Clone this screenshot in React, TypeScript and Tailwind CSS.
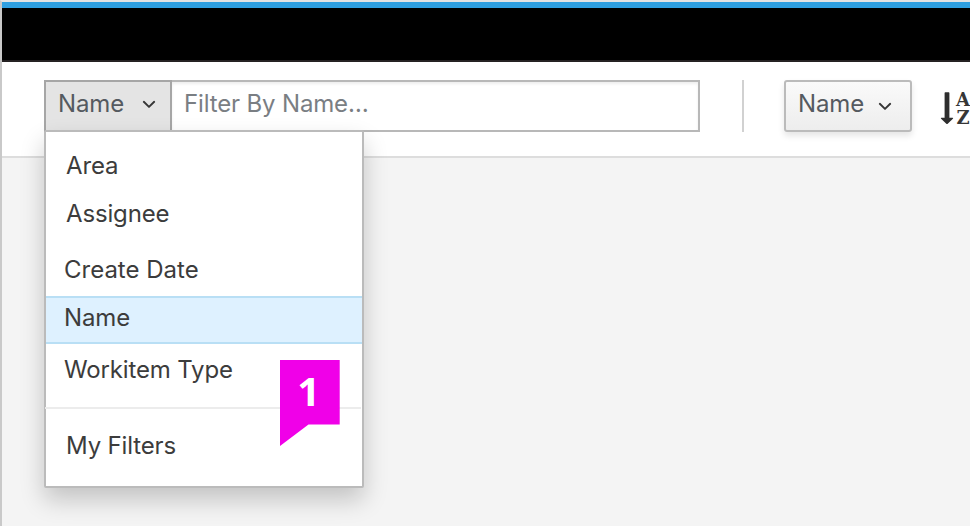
import React from "react";

const Chevron = ({ className = "" }: { className?: string }) => (
  <svg width="14" height="9" viewBox="0 0 14 9" fill="none" className={className}>
    <path d="M1.8 1.8L7 6.9L12.2 1.8" stroke="#363636" strokeWidth="1.9" strokeLinecap="round" strokeLinejoin="round" />
  </svg>
);

const SortIcon = () => (
  <div className="flex">
    <svg width="14" height="34" viewBox="0 0 14 34" className="shrink-0">
      <path d="M4.6 1Q4.6 .3 5.3 .3H8.7Q9.4 .3 9.4 1V25.8H12.4Q13.8 25.8 12.9 26.8L7.7 31.8Q7 32.4 6.3 31.8L1.1 26.8Q.2 25.8 1.6 25.8H4.6Z" fill="#2e2e2e" />
    </svg>
    <div className="ml-[2px] flex w-[14px] shrink-0 flex-col items-center font-['DejaVu_Serif',serif] text-[18px] font-bold leading-[18px] tracking-normal text-[#363636]">
      <span className="-mt-[1px]">A</span>
      <span>Z</span>
    </div>
  </div>
);

const items = [
  { label: "Area", row: "h-12 pl-[20px] leading-[48px]" },
  { label: "Assignee", row: "mb-2 h-12 pl-[20px] leading-[48px]" },
  { label: "Create Date", row: "mb-[2px] h-12 pl-[18px] leading-[48px] tracking-normal" },
  { label: "Name", row: "mb-[2px] h-12 border-y-2 border-[#b9dff5] bg-[#def1ff] pl-[18px] leading-[40px]" },
  { label: "Workitem Type", row: "h-12 pl-[18px] leading-[48px]" },
];

export default function App() {
  return (
    <div className="h-[526px] w-[970px] overflow-hidden border-l-2 border-t-2 border-l-[#c9c9c9] border-t-[#e3e3e3] bg-[#f4f4f4] font-['Inter',sans-serif] text-[24px] font-normal tracking-[-0.15px] text-[#3c3c3c]">
      <header className="h-[60px] border-b-2 border-t-[6px] border-b-[#252223] border-t-[#2f9fe0] bg-black" />
      <div className="flex h-24 items-start border-b-2 border-[#dddddd] bg-white pl-[42px] pt-[18px]">
        <div className="relative flex h-[52px] w-[656px] shrink-0">
          <button className="flex h-[52px] w-[128px] shrink-0 items-start border-2 border-[#a6a6a6] bg-[#e4e4e4] pl-3 text-[#555a60]">
            <span className="w-[84px] text-left leading-[44px]">Name</span>
            <Chevron className="mt-[18px] shrink-0" />
          </button>
          <div className="h-[52px] grow border-y-2 border-r-2 border-[#b8b8b8] bg-white pl-3 leading-[44px] text-[#7a7e83] shadow-[inset_0_2px_3px_rgba(0,0,0,0.07)]">
            Filter By Name…
          </div>
          <div className="absolute left-0 top-[50px] h-[358px] w-[320px] rounded-[2px] border-2 border-[#bbbbbb] bg-white pt-[10px] shadow-[0_12px_24px_rgba(0,0,0,0.2)]">
            {items.map((item) => (
              <div key={item.label} className={item.row}>{item.label}</div>
            ))}
            <div className="-ml-[1px] mt-[13px] h-[2px] w-[316px] bg-[#ececec]" />
            <div className="mt-[13px] h-12 pl-[20px] leading-[48px]">My Filters</div>
            <div className="absolute left-[234px] top-[228px] h-[86px] w-[60px]">
              <svg width="60" height="86" viewBox="0 0 60 86" className="absolute inset-0">
                <path d="M0 0H59.7V64.6H28.5L0 86Z" fill="#f000e8" />
              </svg>
              <span className="absolute left-0 -top-[1px] w-[57px] text-center font-['Open_Sans',sans-serif] text-[40px] font-bold leading-[64px] text-white">1</span>
            </div>
          </div>
        </div>
        <div className="ml-[42px] h-[52px] w-[2px] shrink-0 bg-[#d1d1d1]" />
        <button className="ml-10 flex h-[52px] w-[128px] shrink-0 items-start rounded-[3px] border-2 border-[#bbbbbb] bg-linear-to-b from-[#fafafa] to-[#ededed] pl-3 text-[#555a60] shadow-[0_4px_6px_rgba(3,3,3,0.1)]">
          <span className="w-[80px] text-left leading-[44px]">Name</span>
          <Chevron className="mt-[20px] shrink-0" />
        </button>
        <div className="ml-[28px] mt-[12px] shrink-0"><SortIcon /></div>
      </div>
    </div>
  );
}
